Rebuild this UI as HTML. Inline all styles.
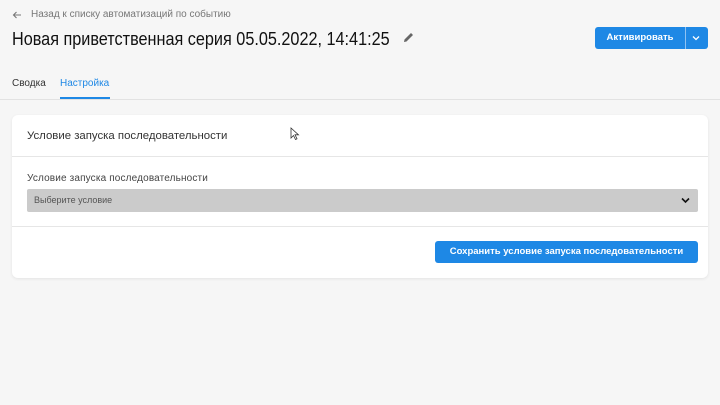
<!DOCTYPE html>
<html><head><meta charset="utf-8"><style>
*{margin:0;padding:0;box-sizing:border-box}
body{width:720px;height:405px;background:#f6f6f6;font-family:"Liberation Sans","Noto Sans CJK SC",sans-serif;position:relative;overflow:hidden;color:#222}
.abs{position:absolute;white-space:nowrap}
</style></head><body>
<svg class="abs" style="left:12px;top:10px" width="10" height="10" viewBox="0 0 10 10"><path d="M9 5H1.5M4.5 2L1.5 5l3 3" stroke="#777" stroke-width="1.1" fill="none"/></svg>
<div class="abs" style="left:31px;top:9px;font-size:10px;color:#777">Назад к списку автоматизаций по событию</div>
<div class="abs" style="left:12px;top:28px;font-size:18.5px;color:#111;transform:scaleX(0.877);transform-origin:0 0">Новая приветственная серия 05.05.2022, 14:41:25</div>
<svg class="abs" style="left:403px;top:32px" width="11" height="11" viewBox="0 0 11 11"><path d="M1 10l0.5-2.5L8 1l2 2-6.5 6.5z" fill="#666"/></svg>
<div class="abs" style="left:595px;top:27px;width:113px;height:22px;background:#1e88e5;border-radius:3px"></div>
<div class="abs" style="left:595px;top:27px;width:90px;height:22px;color:#fff;font-size:9.5px;font-weight:bold;line-height:22px;text-align:center">Активировать</div>
<div class="abs" style="left:685px;top:27px;width:1px;height:22px;background:#8fc2f2"></div>
<svg class="abs" style="left:692px;top:35px" width="8" height="6" viewBox="0 0 8 6"><path d="M1 1.5l3 3 3-3" stroke="#fff" stroke-width="1.3" fill="none"/></svg>
<div class="abs" style="left:12px;top:78px;font-size:10px;color:#333">Сводка</div>
<div class="abs" style="left:60px;top:78px;font-size:10px;color:#1e88e5">Настройка</div>
<div class="abs" style="left:60px;top:97px;width:50px;height:2px;background:#1e88e5"></div>
<div class="abs" style="left:0;top:99px;width:720px;height:1px;background:#e2e2e2"></div>
<div class="abs" style="left:12px;top:115px;width:696px;height:163px;background:#fff;border-radius:6px;box-shadow:0 1px 3px rgba(0,0,0,0.08)"></div>
<div class="abs" style="left:27px;top:130px;font-size:11.4px;color:#333">Условие запуска последовательности</div>
<div class="abs" style="left:12px;top:156px;width:696px;height:1px;background:#e6e6e6"></div>
<div class="abs" style="left:27px;top:173px;font-size:10px;color:#444;letter-spacing:0.15px">Условие запуска последовательности</div>
<div class="abs" style="left:27px;top:189px;width:671px;height:23px;background:#cbcbcb;border-radius:2px"></div>
<div class="abs" style="left:34px;top:195px;font-size:9px;color:#555">Выберите условие</div>
<svg class="abs" style="left:681px;top:197px" width="9" height="7" viewBox="0 0 9 7"><path d="M1 1.5l3.5 3.5 3.5-3.5" stroke="#111" stroke-width="1.6" fill="none"/></svg>
<div class="abs" style="left:12px;top:226px;width:696px;height:1px;background:#e6e6e6"></div>
<div class="abs" style="left:435px;top:241px;width:263px;height:22px;background:#1e88e5;border-radius:3px;color:#fff;font-size:9.5px;font-weight:bold;line-height:22px;text-align:center">Сохранить условие запуска последовательности</div>
<svg class="abs" style="left:290px;top:127px" width="10" height="14" viewBox="0 0 10 14"><path d="M1 1v10l2.5-2.5 2 4 1.5-.7-2-4H8.5z" fill="#fff" stroke="#333" stroke-width="0.8"/></svg>
</body></html>
